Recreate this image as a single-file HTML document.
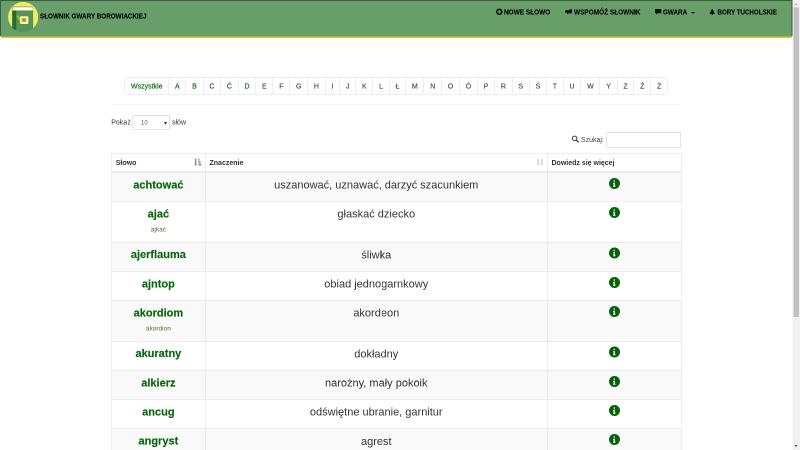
<!DOCTYPE html>
<html lang="pl">
<head>
<meta charset="utf-8">
<title>Słownik gwary borowiackiej</title>
<style>
*{box-sizing:border-box}
html,body{margin:0;padding:0;background:#fff;overflow:hidden;width:800px;height:450px}
body{font-family:"Liberation Sans",Arial,sans-serif;font-size:14px;line-height:1.42857;color:#333}
#stage{will-change:transform;position:absolute;left:0;top:0;width:1600px;height:900px;transform:scale(.5);transform-origin:0 0;overflow:hidden;background:#fff}
/* scrollbar */
#sb{position:absolute;right:0;top:0;width:15px;height:900px;background:#f1f1f1}
#sb .th{position:absolute;left:2.2px;width:10.6px;top:15.4px;height:618.2px;background:#c1c1c1}
#sb .up,#sb .dn{position:absolute;left:4.3px;width:0;height:0;border-left:3.7px solid transparent;border-right:3.7px solid transparent}
#sb .up{top:5.6px;border-bottom:4px solid #a3a3a3}
#sb .dn{bottom:6.2px;border-top:4px solid #505050}
/* navbar */
#nav{position:absolute;left:0;top:0;width:1585px;height:75px;background:#689e6a;border:2px solid #3b5a3e;border-bottom:3px solid #b0b00c;border-radius:0 0 5px 5px;box-shadow:0 2px 2px -1px rgba(176,176,12,.4)}
#navc{position:absolute;left:0;top:0;width:1585px;height:75px}
#logo{position:absolute;left:15.7px;top:3.5px;width:60.6px;height:60px}
#brand{-webkit-text-stroke:.45px #0c120c;position:absolute;left:79.5px;top:22.4px;font-weight:bold;font-size:15px;line-height:20px;color:#0c120c;white-space:nowrap;transform:scaleX(.8408);transform-origin:0 50%}
.ni{-webkit-text-stroke:.45px #0c120c;position:absolute;top:13.8px;line-height:20px;font-weight:bold;font-size:15px;color:#0c120c;white-space:nowrap;transform-origin:0 50%}
.ic{position:absolute;fill:#0c120c}
.ic2{position:absolute;z-index:3}
#caret{position:absolute;left:1381.6px;top:23.8px;width:0;height:0;border-left:4px solid transparent;border-right:4px solid transparent;border-top:4px solid #0c120c}
/* content */
#pg{position:absolute;left:249px;top:154px;height:35px;display:flex;border:1px solid #ddd;border-radius:4px;background:#fff}
#pg span{display:block;height:33px;line-height:33px;padding:1px 12px 0;font-size:14px;color:#444;-webkit-text-stroke:.25px #444;border-left:1px solid #ddd;text-align:center}
#pg span:first-child{border-left:0}
#pg span.g{color:#0a6a0e;-webkit-text-stroke:.3px #0a6a0e}
#hr{position:absolute;left:222.5px;top:208px;width:1140px;height:1px;background:#eee}

.t{position:absolute;white-space:nowrap;font-size:14px;line-height:20px;color:#333}
#sel{position:absolute;left:265px;top:230px;width:75px;height:30px;border:1px solid #ccc;border-radius:3px;background:#fff;font-size:12px;line-height:28px;color:#555;padding-left:16px;box-shadow:inset 0 1px 1px rgba(0,0,0,.075)}
#sel i{position:absolute;right:5.5px;top:12.5px;width:0;height:0;border-left:3.5px solid transparent;border-right:3.5px solid transparent;border-top:5px solid #222}
#inp{position:absolute;left:1213px;top:264.4px;width:149px;height:31.2px;border:1px solid #ccc;border-radius:3px;background:#fff;box-shadow:inset 0 1px 1px rgba(0,0,0,.075)}
#th{position:absolute;left:222.5px;top:306px;width:1140px;height:39px;border:1px solid #ddd;border-bottom:2px solid #ddd;background:#fff;font-weight:bold;font-size:14px;line-height:20px;color:#333}
#th div{position:absolute;top:0;height:36px;padding:8px 0 0 8px;border-left:1px solid #ddd}
#th div:first-child{border-left:0}
.r{position:absolute;left:222.5px;width:1140px;border:1px solid #ddd;border-bottom:0;background:#fff}
.r.o{background:#f9f9f9}
.r>div{position:absolute;top:0;bottom:0;text-align:center;border-left:1px solid #ddd}
.r .c1{left:0;width:186.5px;border-left:0;color:#06660a;font-size:22px;line-height:31.43px;padding-top:8.6px}
.r .c1 b{display:block;-webkit-text-stroke:.3px #06660a}
.r .c1 small{display:block;font-size:13px;line-height:18px;color:#556b2f;margin-top:7px}
.r .c2{left:186.5px;width:684px;font-size:22px;line-height:31.43px;padding-top:9px;color:#333}
.r .c3{left:870.5px;width:267.5px}
.info{position:absolute;left:122.5px;top:10.6px;width:22px;height:22px}
</style>
</head>
<body>
<div id="stage">
<div id="nav"></div>
<div id="navc">
<svg id="logo" viewBox="0 0 30 30">
<defs><clipPath id="cc"><circle cx="15" cy="15" r="15.250"/></clipPath></defs>
<circle cx="15" cy="15" r="15" fill="#ecee6a"/>
<g clip-path="url(#cc)">
<rect x="4.1" y="4.2" width="20.9" height="5" rx="1" fill="#b9b930"/>
<rect x="4.1" y="8.7" width="20.9" height="22" fill="#569456"/>
<rect x="4.1" y="8.7" width="4" height="22" fill="#1e7030"/>
<rect x="5" y="5.4" width="19.6" height="2.8" rx="1" fill="#fff"/>
<path d="M9.300 14.100L12.300 18" stroke="#c4b81c" stroke-width="1.700" stroke-linecap="round" fill="none"/>
<rect x="11.8" y="14.2" width="8.4" height="7.8" rx="1.2" fill="#fafac8"/>
<rect x="13.200" y="15.900" width="5.200" height="4.400" rx="1.300" fill="#cfc31c"/><rect x="15" y="17.200" width="1.700" height="1.900" rx=".4" fill="#6e7418"/>
</g>
</svg>
<div id="brand">SŁOWNIK GWARY BOROWIACKIEJ</div>
<svg class="ic" style="left:991.8px;top:16.6px;width:13.2px;height:13.2px" viewBox="0 0 12 12"><path fill-rule="evenodd" d="M6 0a6 6 0 1 0 0 12A6 6 0 0 0 6 0zM4.800 2.700h2.400v2.100h2.100v2.400H7.200v2.100H4.800V7.200H2.700V4.800h2.100z"/></svg>
<div class="ni" style="left:1008px;transform:scaleX(.8614)">NOWE SŁOWO</div>
<svg class="ic" style="left:1130.4px;top:18.2px;width:13.6px;height:10.6px" viewBox="0 0 13.6 10.6"><path d="M13.600 .7V8.900c0 .5-.5.800-1 .6L6.600 7.300l.7 2.200c.1.500-.1.800-.6.900l-1.700.1c-.4 0-.7-.2-.8-.6L3.300 7.200H1.200C.5 7.200 0 6.700 0 6V3.700C0 3 .5 2.500 1.200 2.500h5.300L12.600.1c.5-.2 1 .1 1 .6z"/></svg>
<div class="ni" style="left:1147.5px;transform:scaleX(.8614)">WSPOMÓŻ SŁOWNIK</div>
<svg class="ic" style="left:1310px;top:18.4px;width:12.6px;height:11px" viewBox="0 0 12.6 11"><path d="M1.200 0h10.200c.7 0 1.200.5 1.200 1.200v6c0 .7-.5 1.200-1.200 1.200H5.200L2 11V8.400h-.8C.5 8.400 0 7.900 0 7.200v-6C0 .5.500 0 1.200 0z"/></svg>
<div class="ni" style="left:1326px;transform:scaleX(.84)">GWARA</div>
<div id="caret"></div>
<svg class="ic" style="left:1419.4px;top:17.8px;width:10.8px;height:12.2px" viewBox="0 0 10.8 12.2"><path d="M5.400 0L8.800 3.800H7.800L9.900 6.800H8.900L10.800 10H6.400v2.200h-2V10H0L1.900 6.800H.9L3 3.800H2z"/></svg>
<div class="ni" style="left:1434.8px;transform:scaleX(.8239)">BORY TUCHOLSKIE</div>
</div>
<div id="pg"><span class="g">Wszystkie</span><span class="g">A</span><span class="g">B</span><span class="g">C</span><span class="g">Ć</span><span class="g">D</span><span>E</span><span>F</span><span>G</span><span>H</span><span>I</span><span>J</span><span>K</span><span>L</span><span>Ł</span><span>M</span><span>N</span><span>O</span><span>Ó</span><span>P</span><span>R</span><span>S</span><span>Ś</span><span>T</span><span>U</span><span>W</span><span>Y</span><span>Z</span><span>Ź</span><span>Ż</span></div>
<div id="hr"></div>

<svg width="0" height="0" style="position:absolute"><defs>
<g id="inf"><circle cx="11" cy="11" r="11" fill="#04630a"/><path d="M9.200 4.800h2.700v2.500H9.200zM8.300 9.400h3.700v6.300h1.100v1.700H8.100v-1.700h1.100v-4.600h-.9z" fill="#fff"/></g>
</defs></svg>
<div class="t" style="left:222.5px;top:234px">Pokaż</div>
<div id="sel">10<i></i></div>
<div class="t" style="left:344px;top:234px">słów</div>
<div class="t" style="left:1161.8px;top:269px;color:#484848">Szukaj:</div>
<div id="inp"></div>
<svg class="ic2" style="left:1143px;top:270px;width:16px;height:16px" viewBox="0 0 16 16"><circle cx="6.300" cy="6.700" r="4.500" fill="none" stroke="#3a3a3a" stroke-width="2"/><path d="M9.800 10.200L13.600 14" stroke="#3a3a3a" stroke-width="2.600" stroke-linecap="round"/></svg>
<svg class="ic2" style="left:387px;top:316px;width:18px;height:17px" viewBox="0 0 18 17" fill="#949494"><path d="M2.700 1h3.200v10.600h1.900L4.300 15.600.8 11.600h1.900z"/><path d="M9.700 1.400h2.600v2.900H9.700zM9.700 4.900h3.900v2.900H9.700zM9.700 8.400h5.100v2.900H9.700zM9.700 11.900h6.300v3.100H9.700z"/></svg>
<svg class="ic2" style="left:1071px;top:316px;width:18px;height:17px" viewBox="0 0 18 17" fill="#d6d6d6"><path d="M3.800 1.400H7v10.200h1.900L5.400 15.600 1.900 11.600h1.900z"/><path d="M11 15.600h3.200V5.400h1.900L12.600 1.400 9.100 5.400H11z"/></svg>

<div id="th"><div style="left:0;width:186.5px">Słowo</div><div style="left:186.5px;width:684px">Znaczenie</div><div style="left:870.5px;width:267.5px">Dowiedz się więcej</div></div>
<div class="r o" style="top:345.00px;height:57.30px;border-top:0;padding-top:1px"><div class="c1"><b>achtować</b></div><div class="c2">uszanować, uznawać, darzyć szacunkiem</div><div class="c3"><svg class="info" viewBox="0 0 22 22"><use href="#inf"/></svg></div></div>
<div class="r" style="top:402.30px;height:81.40px"><div class="c1"><b>ajać</b><small>ajkać</small></div><div class="c2">głaskać dziecko</div><div class="c3"><svg class="info" viewBox="0 0 22 22"><use href="#inf"/></svg></div></div>
<div class="r o" style="top:483.70px;height:58.30px"><div class="c1"><b>ajerflauma</b></div><div class="c2">śliwka</div><div class="c3"><svg class="info" viewBox="0 0 22 22"><use href="#inf"/></svg></div></div>
<div class="r" style="top:542.00px;height:58.30px"><div class="c1"><b>ajntop</b></div><div class="c2">obiad jednogarnkowy</div><div class="c3"><svg class="info" viewBox="0 0 22 22"><use href="#inf"/></svg></div></div>
<div class="r o" style="top:600.30px;height:81.40px"><div class="c1"><b>akordiom</b><small>akordion</small></div><div class="c2">akordeon</div><div class="c3"><svg class="info" viewBox="0 0 22 22"><use href="#inf"/></svg></div></div>
<div class="r" style="top:681.70px;height:58.30px"><div class="c1"><b>akuratny</b></div><div class="c2">dokładny</div><div class="c3"><svg class="info" viewBox="0 0 22 22"><use href="#inf"/></svg></div></div>
<div class="r o" style="top:740.00px;height:58.30px"><div class="c1"><b>alkierz</b></div><div class="c2">narożny, mały pokoik</div><div class="c3"><svg class="info" viewBox="0 0 22 22"><use href="#inf"/></svg></div></div>
<div class="r" style="top:798.30px;height:58.30px"><div class="c1"><b>ancug</b></div><div class="c2">odświętne ubranie, garnitur</div><div class="c3"><svg class="info" viewBox="0 0 22 22"><use href="#inf"/></svg></div></div>
<div class="r o" style="top:856.60px;height:58.30px"><div class="c1"><b>angryst</b></div><div class="c2">agrest</div><div class="c3"><svg class="info" viewBox="0 0 22 22"><use href="#inf"/></svg></div></div>
<div id="sb"><div class="up"></div><div class="th"></div><div class="dn"></div></div>
</div>
</body>
</html>
